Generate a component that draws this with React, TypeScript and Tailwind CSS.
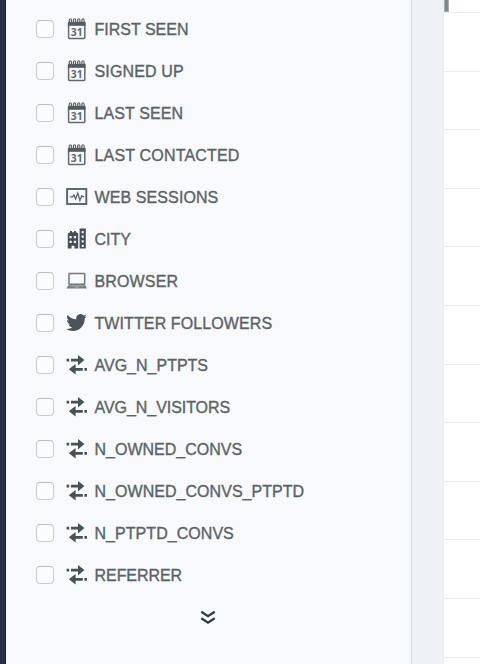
import React from "react";

type IconKind = "calendar" | "sessions" | "city" | "browser" | "twitter" | "custom";

const attributes: { label: string; icon: IconKind; tracking: string }[] = [
  { label: "FIRST SEEN", icon: "calendar", tracking: "tracking-normal" },
  { label: "SIGNED UP", icon: "calendar", tracking: "tracking-[0.15px]" },
  { label: "LAST SEEN", icon: "calendar", tracking: "tracking-[0.1px]" },
  { label: "LAST CONTACTED", icon: "calendar", tracking: "tracking-[0.18px]" },
  { label: "WEB SESSIONS", icon: "sessions", tracking: "tracking-[0.1px]" },
  { label: "CITY", icon: "city", tracking: "tracking-normal" },
  { label: "BROWSER", icon: "browser", tracking: "tracking-[0.15px]" },
  { label: "TWITTER FOLLOWERS", icon: "twitter", tracking: "tracking-[0.1px]" },
  { label: "AVG_N_PTPTS", icon: "custom", tracking: "tracking-normal" },
  { label: "AVG_N_VISITORS", icon: "custom", tracking: "tracking-[-0.05px]" },
  { label: "N_OWNED_CONVS", icon: "custom", tracking: "tracking-normal" },
  { label: "N_OWNED_CONVS_PTPTD", icon: "custom", tracking: "tracking-[0.04px]" },
  { label: "N_PTPTD_CONVS", icon: "custom", tracking: "tracking-[0.05px]" },
  { label: "REFERRER", icon: "custom", tracking: "tracking-[-0.05px]" },
];

function CalendarIcon() {
  return (
    <>
      <rect x="2.6" y="5" width="16.2" height="15.4" rx="0.8" fill="none" stroke="#626a70" strokeWidth="1.5" />
      <path d="M1.9 3.8h17.6v4H1.9z" fill="#535b61" />
      <g fill="#dfe2e6" stroke="#535b61" strokeWidth="1.1">
        <ellipse cx="4.4" cy="2.7" rx="1.2" ry="2" />
        <ellipse cx="8.6" cy="2.7" rx="1.2" ry="2" />
        <ellipse cx="12.8" cy="2.7" rx="1.2" ry="2" />
        <ellipse cx="17" cy="2.7" rx="1.2" ry="2" />
      </g>
      <text x="10.8" y="18" textAnchor="middle" fontSize="10.4" fontWeight="700" fill="#626a70" className="font-['Open_Sans',sans-serif]">31</text>
    </>
  );
}

function SessionsIcon() {
  return (
    <g fill="none" stroke="#59626a">
      <rect x="1.1" y="3" width="19.2" height="15" strokeWidth="1.9" />
      <path d="M3.8 10.8h2.6l1.5-1.8 1.7 4 2.2-6 2.1 7.4 1.8-4.6 1 .8h1.6" strokeWidth="1.3" />
    </g>
  );
}

function CityIcon() {
  return (
    <>
      <path d="M1.8 5.5L4 4.3V3h2v1.3h2V3h2v1.3l2.2 1V20.6H8.4v-2.8H5.6v2.8H1.8zM13.6.6h6.2v20h-6.2z" fill="#464f55" />
      <path d="M3.5 8.1h2.2v2.2H3.5zm4.4 0h2.2v2.2H7.9zM3.5 12.8h2.2V15H3.5zm4.4 0h2.2V15H7.9zM15.7 3h2v2.2h-2zm0 4.6h2v2.2h-2zm0 4.6h2v2.2h-2zm0 4.5h2v2.2h-2z" fill="#f7f8fc" />
    </>
  );
}

function BrowserIcon() {
  return (
    <>
      <rect x="3" y="3.5" width="15.7" height="10.8" rx=".6" fill="none" stroke="#70787d" strokeWidth="1.5" />
      <path d="M2.2 15.2h17.3L20.8 18.4H.6z" fill="#747d82" />
      <path d="M4.5 16h12.8M8.8 17.3h4" stroke="#b3b9bd" strokeWidth=".6" />
    </>
  );
}

function TwitterIcon() {
  return (
    <path
      transform="translate(.2 .2) scale(.86)"
      d="M23.953 4.57a10 10 0 01-2.825.775 4.958 4.958 0 002.163-2.723c-.951.555-2.005.959-3.127 1.184a4.92 4.92 0 00-8.384 4.482C7.69 8.095 4.067 6.13 1.64 3.162a4.822 4.822 0 00-.666 2.475c0 1.71.87 3.213 2.188 4.096a4.904 4.904 0 01-2.228-.616v.06a4.923 4.923 0 003.946 4.827 4.996 4.996 0 01-2.212.085 4.936 4.936 0 004.604 3.417 9.867 9.867 0 01-6.102 2.105c-.39 0-.779-.023-1.17-.067a13.995 13.995 0 007.557 2.209c9.053 0 13.998-7.496 13.998-13.985 0-.21 0-.42-.015-.63A9.935 9.935 0 0024 4.59z"
      fill="#4b545b"
    />
  );
}

function CustomIcon() {
  return (
    <g fill="#465158">
      <path d="M.6 4.8h2.6v2.7H.6zM5 4.8h7V.9l6.4 5.2-6.4 5.3V7.5H5z" />
      <path d="M21 14h-2.6v2.7H21zM16.8 14H9.6V9.9l-6.8 5.4 6.8 5.3v-3.9h7.2z" />
    </g>
  );
}

const icons: Record<IconKind, () => React.JSX.Element> = {
  calendar: CalendarIcon,
  sessions: SessionsIcon,
  city: CityIcon,
  browser: BrowserIcon,
  twitter: TwitterIcon,
  custom: CustomIcon,
};

function AttributeRow({ label, icon, tracking }: { label: string; icon: IconKind; tracking: string }) {
  const Icon = icons[icon];
  return (
    <label className="flex h-[42px] items-center">
      <input
        type="checkbox"
        className="size-[18px] shrink-0 appearance-none rounded-[4px] border-[1.5px] border-[#c9ccd2] border-t-[#b9bdc2] bg-[#fcfcfe]"
      />
      <svg viewBox="0 0 22 22" className="ml-3 h-[22px] w-[22px] shrink-0">
        <Icon />
      </svg>
      <span className={`ml-[6.5px] pt-[2px] text-[16px] leading-6 whitespace-nowrap text-[#5a6366] [-webkit-text-stroke:0.35px_#5a6366] ${tracking}`}>
        {label}
      </span>
    </label>
  );
}

export default function App() {
  return (
    <div className="flex h-[664px] w-[480px] overflow-hidden bg-white font-['Liberation_Sans',Arial,sans-serif]">
      <nav className="w-[6px] shrink-0 border-r border-[#18202b] bg-[#27313f]" />
      <aside className="flex w-[406px] shrink-0 flex-col border-r border-[#d5dade] bg-[#f8f9fd] pt-2 pl-[30px]">
        {attributes.map(({ label, icon, tracking }) => (
          <AttributeRow key={label} label={label} icon={icon} tracking={tracking} />
        ))}
        <button className="mt-[13px] ml-[163px] flex size-[18px] items-center justify-center" aria-label="Show more">
          <svg viewBox="0 0 18 18" className="size-[18px]" fill="none" stroke="#343c43" strokeWidth="2.3">
            <path d="M2.3 2.7L9 7.1l6.7-4.4M2.3 9.3L9 13.7l6.7-4.4" />
          </svg>
        </button>
      </aside>
      <div className="w-[32px] shrink-0 border-r border-[#ebedf0] bg-[#eef2f7]" />
      <main className="flex min-w-0 flex-1 flex-col">
        <div className="h-[13px] shrink-0 border-b border-[#ebecee]">
          <div className="h-3 w-[5px] border border-t-0 border-[#a4adb2] bg-[#7d888e]" />
        </div>
        {Array.from({ length: 12 }, (_, i) => (
          <div key={i} className="h-[58.6px] shrink-0 border-b border-[#ebecee]" />
        ))}
      </main>
    </div>
  );
}
